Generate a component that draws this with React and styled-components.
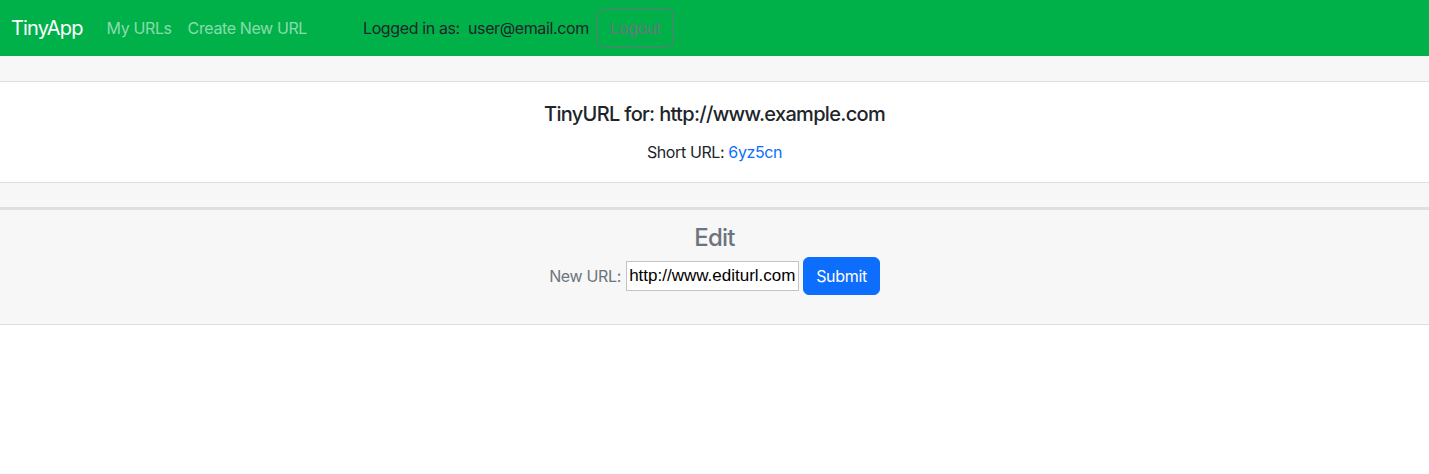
import React from "react";
import styled, { createGlobalStyle } from "styled-components";

const GlobalStyle = createGlobalStyle`
  html, body { margin: 0; padding: 0; background: #fff; }
  body {
    font-family: Inter, "Noto Sans", "Liberation Sans", sans-serif;
    font-size: 16px;
    line-height: 1.5;
    letter-spacing: -0.024em;
    color: #212529;
  }
  * { box-sizing: border-box; }
`;

const Navbar = styled.nav`
  display: flex;
  align-items: center;
  height: 56px;
  padding: 0 11px;
  background: #00b14a;
`;

const Brand = styled.a`
  font-size: 20px;
  letter-spacing: -0.042em;
  color: #fff;
  text-decoration: none;
  margin-right: 16px;
  line-height: 30px;
`;

const NavList = styled.div`
  display: flex;
  align-items: center;
`;

const NavLink = styled.a`
  padding: 8px;
  color: rgba(255, 255, 255, 0.55);
  text-decoration: none;
`;

const UserArea = styled.div`
  display: flex;
  align-items: center;
  gap: 8px;
  margin-left: 48px;
`;

const UserText = styled.span`
  color: #212529;
  white-space: pre;
`;

const OutlineButton = styled.button`
  font-family: inherit;
  font-size: 16px;
  letter-spacing: -0.02em;
  line-height: 24px;
  padding: 6px 12px;
  border: 1px solid #6c757d;
  border-radius: 6px;
  background: transparent;
  color: #6c757d;
`;

const Section = styled.section`
  background: ${(p) => (p.$muted ? "#f7f7f7" : "#fff")};
  border-bottom: 1px solid #dfdfdf;
  border-top: ${(p) => (p.$topBorder ? `${p.$topBorder}px solid #dfdfdf` : "none")};
  height: ${(p) => (p.$height ? `${p.$height}px` : "auto")};
  padding: ${(p) => p.$pad || "0"};
  text-align: center;
`;

const Title = styled.h5`
  margin: 0 0 14px;
  font-size: 20px;
  font-weight: 500;
  letter-spacing: -0.034em;
  line-height: 24px;
  color: #212529;
`;

const Text = styled.p`
  margin: 0;
  line-height: 24px;
`;

const Link = styled.a`
  color: #0d6efd;
  text-decoration: none;
`;

const EditTitle = styled.h4`
  margin: 0 0 5px;
  font-size: 24px;
  font-weight: 500;
  letter-spacing: -0.03em;
  line-height: 28px;
  color: #6c757d;
`;

const Form = styled.form`
  display: flex;
  justify-content: center;
  align-items: center;
`;

const Label = styled.label`
  color: #6c757d;
  letter-spacing: -0.02em;
  margin-right: 5px;
`;

const Input = styled.input`
  width: 173px;
  height: 30px;
  padding: 1px 2px;
  border: 1px solid #c4c4c4;
  font-family: "Liberation Sans", Arial, sans-serif;
  font-size: 17px;
  letter-spacing: 0;
  color: #000;
  background: #fff;
  margin-right: 4px;
`;

const PrimaryButton = styled.button`
  font-family: inherit;
  font-size: 16px;
  letter-spacing: -0.02em;
  line-height: 24px;
  padding: 6px 12px;
  border: 1px solid #0d6efd;
  border-radius: 6px;
  background: #0d6efd;
  color: #fff;
`;

export default function App() {
  return (
    <>
      <GlobalStyle />
      <Navbar>
        <Brand href="#">TinyApp</Brand>
        <NavList>
          <NavLink href="#">My URLs</NavLink>
          <NavLink href="#">Create New URL</NavLink>
        </NavList>
        <UserArea>
          <UserText>Logged in as:  user@email.com</UserText>
          <OutlineButton type="button">Logout</OutlineButton>
        </UserArea>
      </Navbar>
      <Section $muted $height={26} />
      <Section $pad="20px 0 18px">
        <Title>TinyURL for: http://www.example.com</Title>
        <Text>
          Short URL: <Link href="#">6yz5cn</Link>
        </Text>
      </Section>
      <Section $muted $height={25} />
      <Section $muted $topBorder={2} $pad="14px 0 29px">
        <EditTitle>Edit</EditTitle>
        <Form onSubmit={(e) => e.preventDefault()}>
          <Label>New URL:</Label>
          <Input type="text" defaultValue="http://www.editurl.com" />
          <PrimaryButton type="submit">Submit</PrimaryButton>
        </Form>
      </Section>
    </>
  );
}
